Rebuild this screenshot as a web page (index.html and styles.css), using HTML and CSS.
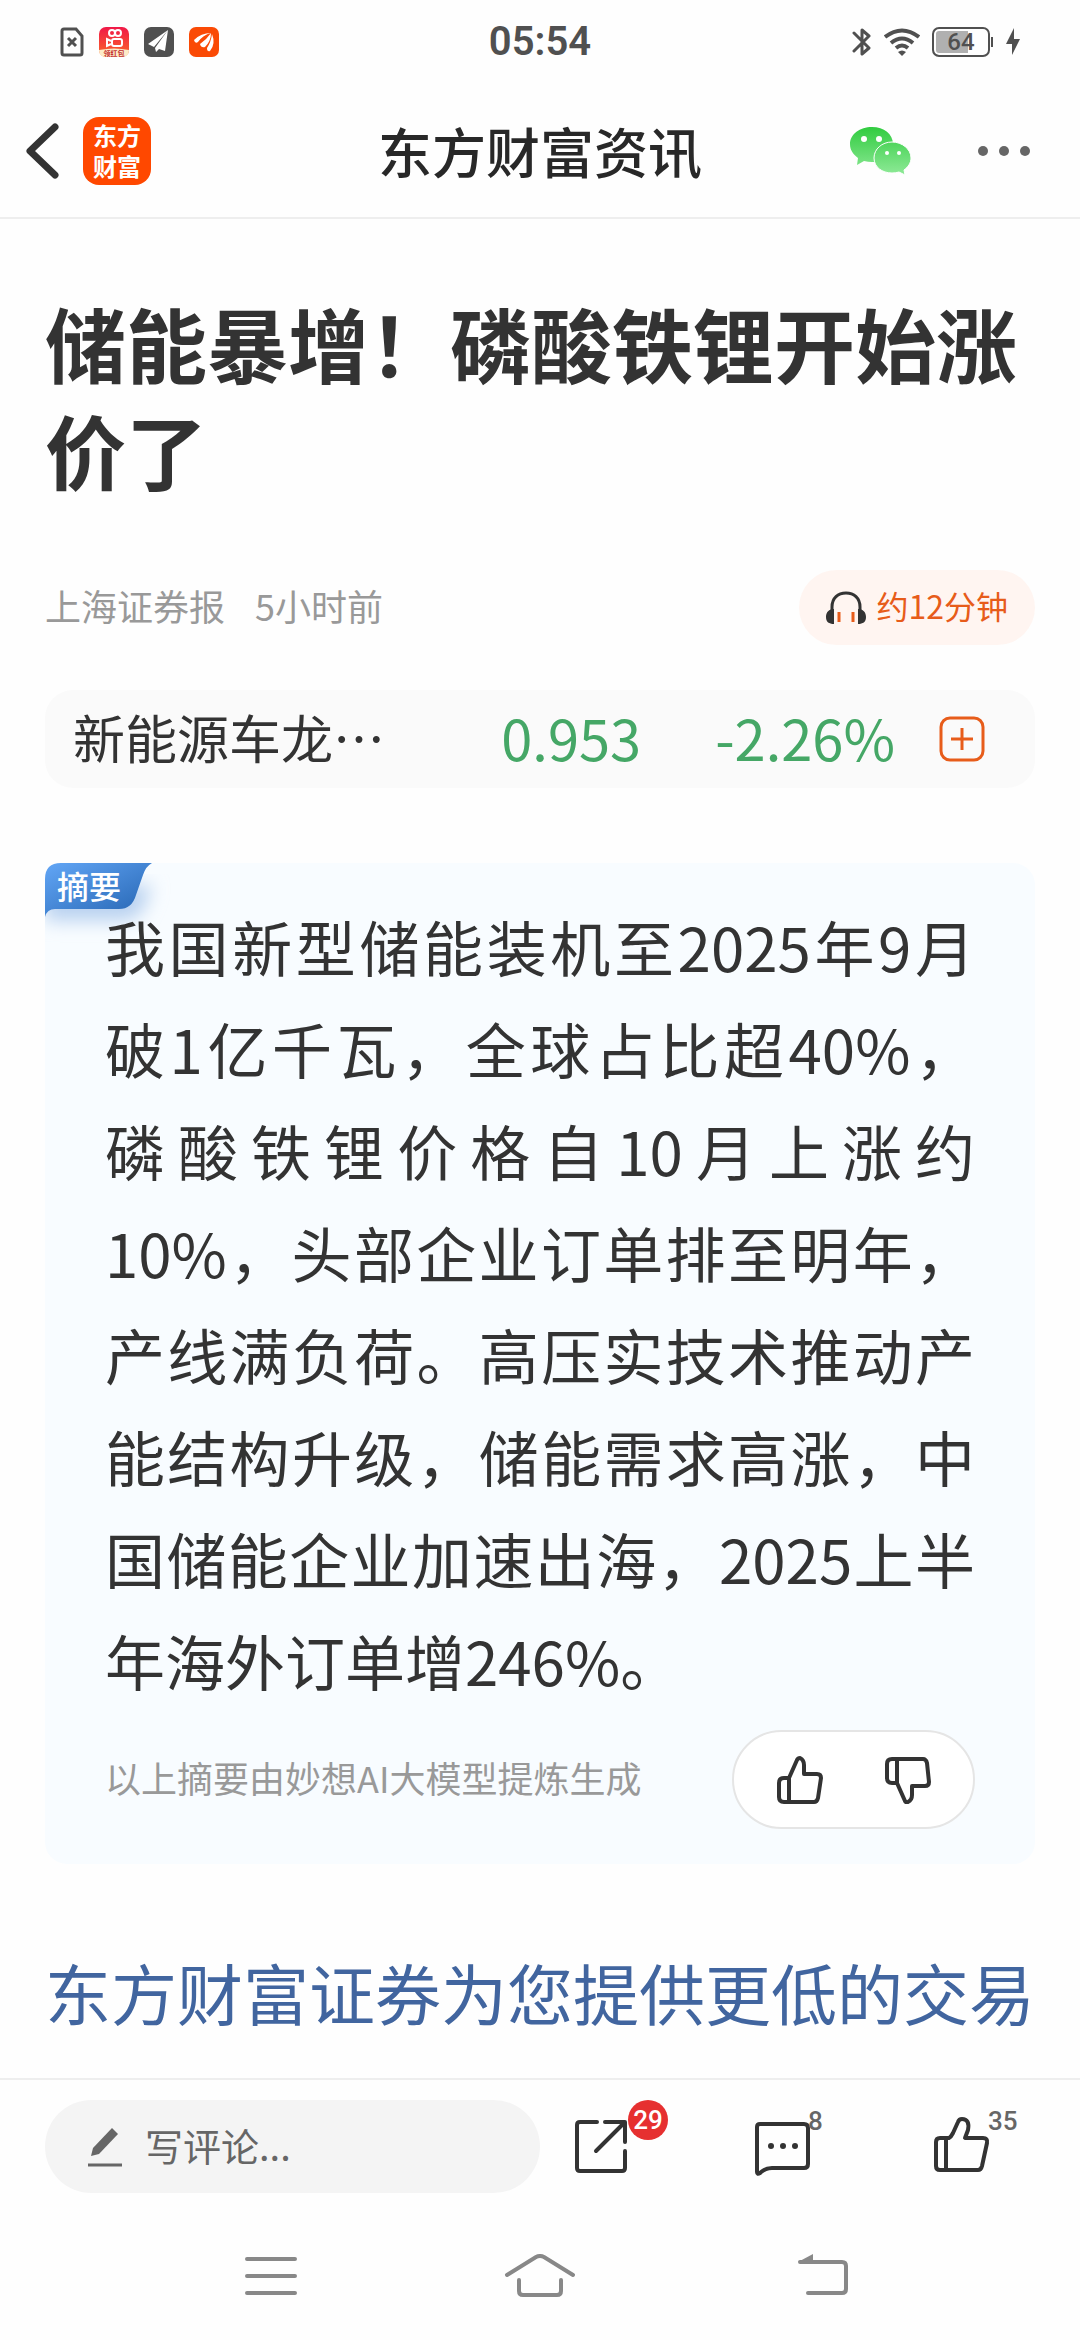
FILE: index.html
```
<!DOCTYPE html>
<html lang="zh-CN">

<head>
<title>东方财富资讯</title>
<meta charset="UTF-8">
<meta name="viewport" content="width=device-width">

<link rel="stylesheet" href="styles.css">
</head>

<body>

	<!-- status bar -->
	<div id="status">
		<div class="notices">
			<svg width="24" height="30" viewBox="0 0 24 30"><path d="M4 2H16L22 9V26Q22 28 20 28H4Q2 28 2 26V4Q2 2 4 2Z" fill="none" stroke="#505050" stroke-width="3"/><path d="M8 11L16 19M16 11L8 19" stroke="#505050" stroke-width="3"/></svg>
			<svg width="30" height="30" viewBox="0 0 30 30">
				<defs><linearGradient id="ks" x1="0" y1="0" x2="0" y2="1"><stop offset="0" stop-color="#f01848"/><stop offset="1" stop-color="#fb6a28"/></linearGradient></defs>
				<rect width="30" height="30" rx="7" fill="url(#ks)"/>
				<path d="M0 23Q15 20 30 23Q30 30 23 30H7Q0 30 0 23Z" fill="#fdebc8"/>
				<g fill="none" stroke="#fff" stroke-width="2"><circle cx="13" cy="6" r="3"/><circle cx="19" cy="6" r="3"/><rect x="13" y="12" width="10" height="7" rx="2"/><path d="M12 14L8 12V19L12 17"/></g>
				<text x="15" y="29" font-size="7" font-weight="700" text-anchor="middle" fill="#c33030">领红包</text>
			</svg>
			<svg width="30" height="30" viewBox="0 0 30 30"><rect width="30" height="30" rx="7" fill="#505050"/><path d="M24 3L4 17L10 20ZM24 3L11 21L12 25L15 22L21 24Z" fill="#fff"/></svg>
			<svg width="30" height="30" viewBox="0 0 30 30"><rect width="30" height="30" rx="7" fill="#fa4a05"/><g fill="#fff"><path d="M5 13Q12 6 22 6Q14 8 9 15Q6 17 5 13Z"/><path d="M11 17Q18 12 22 6Q22 14 16 20Q12 21 11 17Z"/><path d="M18 21Q22 15 23 7Q27 17 21 24Q18 25 18 21Z"/></g></svg>
		</div>
		<time>05:54</time>
		<div class="signals">
			<svg width="20" height="30" viewBox="0 0 20 30"><path d="M2 6L17 21L10 27V3L17 9L2 24" fill="none" stroke="#505050" stroke-width="3" stroke-linejoin="round" stroke-linecap="round"/></svg>
			<svg width="36" height="28" viewBox="0 0 36 28"><g fill="none" stroke="#505050" stroke-width="4"><path d="M1 9Q18 -4 35 9"/><path d="M7 15Q18 6 29 15"/><path d="M12 20Q18 15 24 20"/></g><path d="M14 24Q18 21 22 24L18 28Z" fill="#505050"/></svg>
			<span class="battery">64</span>
			<svg class="bolt" width="14" height="30" viewBox="0 0 14 30"><path d="M8 1L0 17H6V28L14 12H8Z" fill="#505050"/></svg>
		</div>
	</div>

	<header id="header">
		<div class="left">
			<button aria-label="返回"><svg width="34" height="56" viewBox="0 0 34 56"><path d="M29 4L4 28L29 52" fill="none" stroke="#333" stroke-width="7" stroke-linecap="round" stroke-linejoin="round"/></svg></button>
			<a class="logo" href="#">东方<br>财富</a>
		</div>
		<h2>东方财富资讯</h2>
		<div class="right">
			<button aria-label="微信">
				<svg width="62" height="50" viewBox="0 0 62 50">
					<defs><linearGradient id="wx" gradientUnits="userSpaceOnUse" x1="0" y1="0" x2="0" y2="48"><stop offset="0" stop-color="#2fcb3e"/><stop offset="1" stop-color="#8de996"/></linearGradient></defs>
					<path d="M22 1C10 1 0 8 0 18C0 24 3 28 8 32L7 39L14 35Q18 36 22 36C34 36 43 28 43 18C43 8 34 1 22 1Z" fill="url(#wx)"/>
					<path d="M42 16C32 16 24 23 24 32C24 41 32 47 42 47Q46 47 49 46L55 49L54 44C58 41 61 37 61 32C61 23 52 16 42 16Z" fill="url(#wx)" stroke="#fff" stroke-width="1"/>
					<g fill="#fff"><circle cx="14" cy="13" r="3"/><circle cx="29" cy="13" r="3"/><circle cx="37" cy="27" r="2"/><circle cx="49" cy="27" r="2"/></g>
				</svg>
			</button>
			<button aria-label="更多"><svg width="52" height="10" viewBox="0 0 52 10" fill="#666"><circle cx="5" cy="5" r="5"/><circle cx="26" cy="5" r="5"/><circle cx="47" cy="5" r="5"/></svg></button>
		</div>
	</header>

	<main id="article">
		<h1>储能暴增！磷酸铁锂开始涨价了</h1>

		<div class="meta">
			<span>上海证券报</span>
			<span>5小时前</span>
			<button class="listen">
				<svg width="40" height="34" viewBox="0 0 40 34"><path d="M6 22V16C6 7 12 2 20 2S34 7 34 16V22" fill="none" stroke="#333" stroke-width="3"/><path d="M8 18C3 18 0 21 0 26S3 33 8 33ZM32 18C37 18 40 21 40 26S37 33 32 33Z" fill="#333"/><path d="M13 21V31M27 21V31" stroke="#e75c1a" stroke-width="3"/></svg>
				<span>约12分钟</span>
			</button>
		</div>

		<div class="quote">
			<span class="name">新能源车龙⋯</span>
			<span class="price">0.953</span>
			<span class="change">-2.26%</span>
			<button aria-label="加自选"><svg width="46" height="46" viewBox="0 0 46 46" fill="none" stroke="#e75c1a" stroke-width="3"><rect x="2" y="2" width="42" height="42" rx="9"/><path d="M12 23H34M23 12V34"/></svg></button>
		</div>

		<section class="summary">
			<div class="tag">
				<svg width="160" height="90" viewBox="0 0 160 90">
					<defs>
						<linearGradient id="tag" x1="0" y1="0" x2="1" y2="1"><stop offset="0" stop-color="#62a6f6"/><stop offset="1" stop-color="#2463b0"/></linearGradient>
						<filter id="glow" x="-30%" y="-30%" width="170%" height="220%"><feGaussianBlur stdDeviation="9"/></filter>
					</defs>
					<path d="M0 22H107L100 42Q94 58 76 58H0Z" fill="#b9d2f0" filter="url(#glow)"/>
					<path d="M0 54V16Q0 0 16 0H107Q101 3 98 12L91 32Q87 46 74 46H10Q2 46 0 54Z" fill="url(#tag)"/>
				</svg>
				<span>摘要</span>
			</div>
			<p>我国新型储能装机至2025年9月破1亿千瓦，全球占比超40%，磷酸铁锂价格自10月上涨约10%，头部企业订单排至明年，产线满负荷。高压实技术推动产能结构升级，储能需求高涨，中国储能企业加速出海，2025上半年海外订单增246%。</p>
			<footer>
				<small>以上摘要由妙想AI大模型提炼生成</small>
				<div class="vote">
					<button aria-label="赞"><svg width="46" height="48" viewBox="0 0 46 48"><path d="M12 22L20 4Q21 2 23 2Q27 4 27 9V18H40Q44 18 44 22L41 42Q40 46 37 46H7Q2 46 2 41V27Q2 22 7 22H12V46" /></svg></button>
					<button aria-label="踩"><svg width="46" height="48" viewBox="0 0 46 48"><path d="M12 27L20 45Q21 47 23 46Q27 44 27 39V30H40Q44 30 44 26L42 7Q41 3 38 3H7Q2 3 2 8V22Q2 27 7 27H12V3"/></svg></button>
				</div>
			</footer>
		</section>

		<a class="promo" href="#">东方财富证券为您提供更低的交易</a>
	</main>

	<!-- comment bar -->
	<div id="toolbar">
		<label class="comment">
			<svg width="36" height="44" viewBox="0 0 36 44"><path d="M4 32L6 24L25 4L31 10L12 30Z" fill="#666"/><path d="M1 41H35" stroke="#666" stroke-width="3"/></svg>
			<input type="text" placeholder="写评论..." aria-label="写评论">
		</label>
		<div class="actions">
			<button aria-label="分享">
				<svg width="56" height="60" viewBox="0 0 56 60"><path d="M23 6H6Q3 6 3 9V52Q3 55 6 55H48Q51 55 51 52V35" /><path d="M31 6H51V26M50 7L22 35"/></svg>
				<b class="badge">29</b>
			</button>
			<button aria-label="评论">
				<svg width="56" height="60" viewBox="0 0 56 60"><path d="M6 8H50Q54 8 54 12V48Q54 52 50 52H18Q11 52 6 57Q3 59 3 56V11Q3 8 6 8Z"/><g fill="#333" stroke="none"><circle cx="17" cy="30" r="3"/><circle cx="29" cy="30" r="3"/><circle cx="41" cy="30" r="3"/></g></svg>
				<span class="count">8</span>
			</button>
			<button aria-label="点赞">
				<svg width="56" height="60" viewBox="0 0 56 60"><path d="M12 54V22H15Q17 21 19 17L24 6Q25 3 28 3Q36 3 34 14L31 22H49Q54 22 53 27L48 50Q47 54 44 54H6Q2 54 2 50V26Q2 22 6 22H12"/></svg>
				<span class="count">35</span>
			</button>
		</div>
	</div>

	<!-- system keys -->
	<nav id="keys">
		<button aria-label="菜单"><svg width="72" height="44" viewBox="0 0 72 44"><path d="M13 5H61M13 22H61M13 39H61"/></svg></button>
		<button aria-label="主页"><svg width="72" height="44" viewBox="0 0 72 44"><path d="M3 21L32 3Q36 1 40 3L69 21M15 26V37Q15 41 19 41H53Q57 41 57 37V26"/></svg></button>
		<button aria-label="后退"><svg width="80" height="44" viewBox="0 0 80 44"><path d="M38 39H72Q76 39 76 35V12Q76 8 72 8H30"/><path d="M28 8L43 0V8Z" fill="#888" stroke="none"/></svg></button>
	</nav>

</body>
</html>
```
FILE: styles.css
```
* {
	box-sizing: border-box;
}
body {
	margin: 0;
	min-height: 100vh;
	display: flex;
	flex-direction: column;
	background: #fefefe;
	color: #333;
	font-family: "Noto Sans CJK SC", sans-serif;
}
h1, h2, p {
	margin: 0;
}
button {
	margin: 0;
	padding: 0;
	border: 0;
	background: none;
	color: inherit;
	font-family: inherit;
}
svg {
	display: block;
}
a {
	text-decoration: none;
}

/* status bar */
#status {
	display: grid;
	grid-template-columns: 1fr auto 1fr;
	align-items: center;
	height: 84px;
	padding: 0 60px;
	color: #505050;
}
#status time {
	font: 600 40px/40px Roboto, sans-serif;
}
.notices, .signals {
	display: flex;
	align-items: center;
	gap: 15px;
}
.signals {
	justify-content: flex-end;
	gap: 12px;
}
.battery {
	position: relative;
	width: 58px;
	height: 30px;
	border: 2px solid #505050;
	border-radius: 7px;
	box-shadow: inset 0 0 0 2px #fefefe;
	background: linear-gradient(90deg, #b0b0b0 34px, #fefefe 34px);
	font: 500 24px/27px Roboto, sans-serif;
	text-align: center;
}
.battery::after {
	content: "";
	position: absolute;
	top: 8px;
	right: -5px;
	width: 2px;
	height: 10px;
	background: #505050;
}
.bolt {
	margin-left: 4px;
}

/* page header */
#header {
	display: grid;
	grid-template-columns: 1fr auto 1fr;
	align-items: center;
	height: 135px;
	padding: 0 50px 0 26px;
	border-bottom: 2px solid #eee;
}
#header h2 {
	color: #282828;
	font-size: 54px;
	font-weight: 500;
	line-height: 80px;
	margin-left: 24px;
}
.left, .right {
	display: flex;
	align-items: center;
}
.left {
	gap: 23px;
}
.right {
	justify-content: flex-end;
	gap: 66px;
}
.logo {
	width: 68px;
	height: 68px;
	padding-top: 2px;
	border-radius: 16px;
	background: #ff4800;
	color: #fff;
	font-size: 24px;
	font-weight: 700;
	line-height: 31px;
	text-align: center;
}

/* article */
#article {
	flex: 1;
	padding: 69px 45px 0;
}
h1 {
	font-size: 81px;
	font-weight: 700;
	line-height: 107px;
}
.meta {
	display: flex;
	align-items: center;
	gap: 30px;
	margin-top: 68px;
	color: #999;
	font-size: 36px;
}
.meta span, .quote span, .summary small {
	padding-bottom: 6px;
}
.listen {
	display: flex;
	align-items: center;
	gap: 10px;
	height: 75px;
	margin-left: auto;
	padding: 0 27px;
	border-radius: 38px;
	background: #fff5f1;
	color: #e75c1a;
	font-size: 32px;
}
.quote {
	display: flex;
	align-items: center;
	height: 98px;
	margin-top: 45px;
	padding: 0 50px 0 28px;
	border-radius: 28px;
	background: #fafafa;
	font-size: 56px;
}
.quote .name {
	flex: 1;
	font-size: 52px;
}
.price, .change {
	color: #45a766;
}
.change {
	margin: 0 44px 0 74px;
}

/* summary card */
.summary {
	position: relative;
	margin-top: 75px;
	padding: 32px 60px 35px;
	border-radius: 22px;
	background: #f8fcff;
}
.tag {
	position: absolute;
	top: 0;
	left: 0;
}
.tag span {
	position: absolute;
	top: 0;
	left: 12px;
	color: #fff;
	font-size: 32px;
	font-weight: 500;
	line-height: 44px;
}
.summary p {
	position: relative;
	font-size: 60px;
	line-height: 102px;
	text-align: justify;
}
.summary footer {
	display: flex;
	align-items: center;
	justify-content: space-between;
	margin-top: 19px;
}
.summary small {
	color: #999;
	font-size: 36px;
}
.vote {
	display: flex;
	align-items: center;
	justify-content: center;
	gap: 62px;
	width: 243px;
	height: 99px;
	border: 2px solid #e5e5e5;
	border-radius: 50px;
	background: #fff;
}
.vote svg {
	fill: none;
	stroke: #333;
	stroke-width: 4;
	stroke-linejoin: round;
}
.promo {
	display: block;
	margin-top: 76px;
	color: #41659f;
	font-size: 66px;
	line-height: 102px;
}

/* comment bar */
#toolbar {
	display: flex;
	align-items: center;
	gap: 34px;
	height: 134px;
	padding: 0 90px 0 45px;
	border-top: 2px solid #eee;
}
.comment {
	flex: 1;
	min-width: 0;
	display: flex;
	align-items: center;
	gap: 22px;
	height: 93px;
	padding: 0 42px;
	border-radius: 47px;
	background: #f4f4f4;
}
.comment input {
	flex: 1;
	min-width: 0;
	padding: 0 0 4px;
	border: 0;
	outline: 0;
	background: none;
	font: 38px "Noto Sans CJK SC", sans-serif;
}
.comment input::placeholder {
	color: #666;
}
.actions {
	display: flex;
	gap: 124px;
}
.actions button {
	position: relative;
}
.actions svg {
	fill: none;
	stroke: #333;
	stroke-width: 4;
	stroke-linecap: round;
	stroke-linejoin: round;
}
.badge {
	position: absolute;
	top: -16px;
	left: 54px;
	width: 40px;
	height: 40px;
	border-radius: 20px;
	background: #e63030;
	color: #fff;
	font: 500 26px/40px Roboto, sans-serif;
}
.count {
	position: absolute;
	top: -8px;
	left: 54px;
	color: #666;
	font: 500 26px/26px Roboto, sans-serif;
}

/* system keys */
#keys {
	display: grid;
	grid-template-columns: repeat(3, 1fr);
	align-items: center;
	justify-items: center;
	height: 128px;
	padding: 0 135px;
}
#keys svg {
	fill: none;
	stroke: #888;
	stroke-width: 4;
	stroke-linecap: round;
}
```
